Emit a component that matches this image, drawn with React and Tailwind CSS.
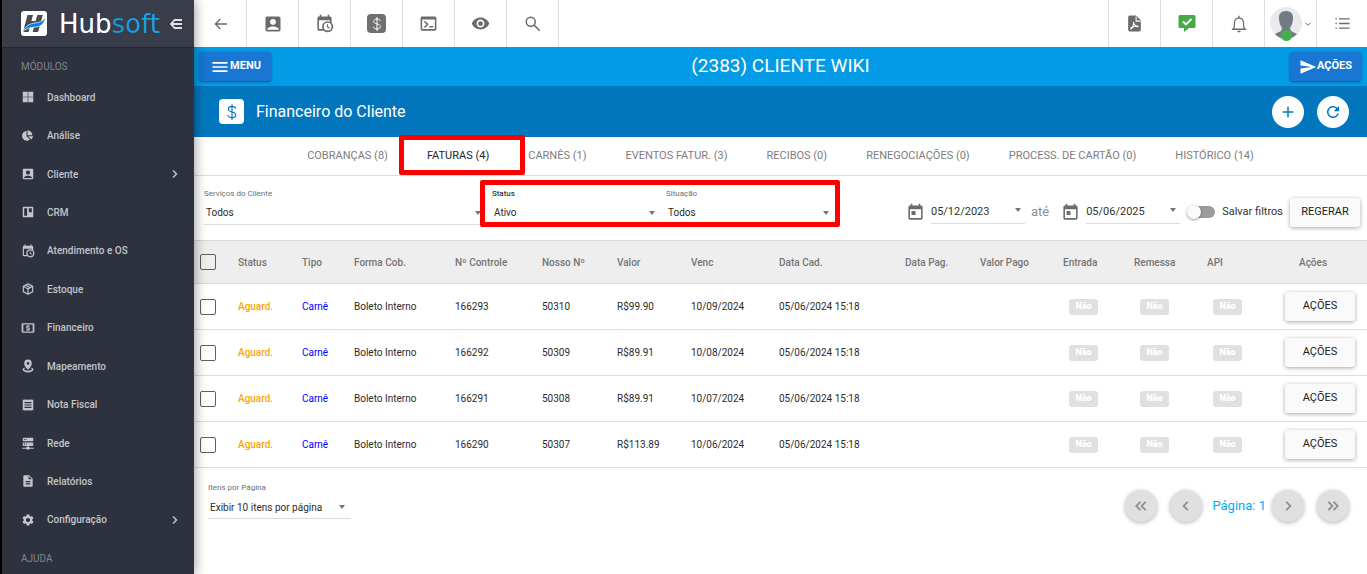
import * as React from "react";
import {
  MdAccountBox,
  MdAdd,
  MdDescription,
  MdMenu,
  MdReceipt,
  MdRefresh,
  MdSend,
  MdSettings,
  MdToday,
  MdVisibility,
} from "react-icons/md";
import { FaChartPie } from "react-icons/fa";

const ICONS = {
  windows: "M3 3h8.5v8.5H3zM12.5 3H21v8.5h-8.5zM3 12.5h8.5V21H3zM12.5 12.5H21V21h-8.5z",
  board:
    "M4 3h16a1 1 0 0 1 1 1v16a1 1 0 0 1-1 1H4a1 1 0 0 1-1-1V4a1 1 0 0 1 1-1M5.5 5.5v13h5v-13zM13.5 5.5v7h5v-7z",
  calendarClock:
    "M15 13h1.5v2.82l2.44 1.41-.75 1.3L15 16.69V13M19 8H5v11h4.67A7 7 0 0 1 9 16a7 7 0 0 1 7-7c1.07 0 2.09.24 3 .67V8M5 21a2 2 0 0 1-2-2V5c0-1.11.89-2 2-2h1V1h2v2h8V1h2v2h1a2 2 0 0 1 2 2v6.1A7 7 0 0 1 16 23a6.97 6.97 0 0 1-4.9-2H5m11-9.85a4.85 4.85 0 1 0 0 9.7 4.85 4.85 0 0 0 0-9.7z",
  box: "M21 16.5c0 .38-.21.71-.53.88l-7.9 4.44c-.16.12-.36.18-.57.18s-.41-.06-.57-.18l-7.9-4.44A1 1 0 0 1 3 16.5v-9c0-.38.21-.71.53-.88l7.9-4.44c.16-.12.36-.18.57-.18s.41.06.57.18l7.9 4.44c.32.17.53.5.53.88v9M12 4.15l-1.89 1.07L16 8.61l1.96-1.11L12 4.15M6.04 7.5 12 10.85l1.96-1.1-5.88-3.4L6.04 7.5M5 15.91l6 3.38v-6.71L5 9.21v6.7m14 0v-6.7l-6 3.37v6.71l6-3.38z",
  cash: "M3 4h18a2 2 0 0 1 2 2v12a2 2 0 0 1-2 2H3a2 2 0 0 1-2-2V6a2 2 0 0 1 2-2M4 6v12h16V6zM11 17v-1H9v-2h4v-1h-3a1 1 0 0 1-1-1V9a1 1 0 0 1 1-1h1V7h2v1h2v2h-4v1h3a1 1 0 0 1 1 1v3a1 1 0 0 1-1 1h-1v1z",
  pin: "M12 1a6.5 6.5 0 0 1 6.5 6.5C18.5 12.3 12 18.5 12 18.5S5.5 12.3 5.5 7.5A6.5 6.5 0 0 1 12 1M12 5.2a2.3 2.3 0 1 0 0 4.6 2.3 2.3 0 0 0 0-4.6M5.5 14.5l1.3 1.6c-1 .5-1.6 1-1.6 1.6 0 1.3 3 2.5 6.8 2.5s6.8-1.2 6.8-2.5c0-.6-.6-1.1-1.6-1.6l1.3-1.6c1.8 1 2.7 2.2 2.7 3.5 0 3-4 5-9.2 5s-9.2-2-9.2-5c0-1.3.9-2.5 2.7-3.5z",
  server:
    "M13 19h1a1 1 0 0 1 1 1h7v2h-7a1 1 0 0 1-1 1h-4a1 1 0 0 1-1-1H2v-2h7a1 1 0 0 1 1-1h1v-2H4a1 1 0 0 1-1-1v-4a1 1 0 0 1 1-1h16a1 1 0 0 1 1 1v4a1 1 0 0 1-1 1h-7v2M4 3h16a1 1 0 0 1 1 1v4a1 1 0 0 1-1 1H4a1 1 0 0 1-1-1V4a1 1 0 0 1 1-1m5 4h1V5H9v2m0 8h1v-2H9v2M5 5v2h2V5H5m0 8v2h2v-2H5z",
  console:
    "M20 19V7H4v12h16m0-16a2 2 0 0 1 2 2v14a2 2 0 0 1-2 2H4a2 2 0 0 1-2-2V5c0-1.11.9-2 2-2h16m-7 14v-2h5v2h-5m-3.42-4L5.57 9H8.4l3.3 3.3c.39.39.39 1.03 0 1.42L8.42 17H5.59l3.99-4z",
};

const Icon = ({ name, className }) => (
  <svg viewBox="0 0 24 24" fill="currentColor" fillRule="evenodd" className={className} aria-hidden="true">
    <path d={ICONS[name]} />
  </svg>
);

const Line = ({ d, className, width = 2 }) => (
  <svg
    viewBox="0 0 24 24"
    fill="none"
    stroke="currentColor"
    strokeWidth={width}
    className={className}
    aria-hidden="true"
  >
    <path d={d} />
  </svg>
);

const MENU = [
  { label: "Dashboard", icon: <Icon name="windows" className="size-3.5" /> },
  { label: "Análise", icon: <FaChartPie className="ml-px size-[11px]" /> },
  { label: "Cliente", icon: <MdAccountBox className="size-3.5" />, open: true },
  { label: "CRM", icon: <Icon name="board" className="size-3.5" /> },
  { label: "Atendimento e OS", icon: <Icon name="calendarClock" className="size-3.5" /> },
  { label: "Estoque", icon: <Icon name="box" className="size-3.5" /> },
  { label: "Financeiro", icon: <Icon name="cash" className="size-3.5" /> },
  { label: "Mapeamento", icon: <Icon name="pin" className="size-3.5" /> },
  { label: "Nota Fiscal", icon: <MdReceipt className="size-3.5" /> },
  { label: "Rede", icon: <Icon name="server" className="size-3.5" /> },
  { label: "Relatórios", icon: <MdDescription className="size-3.5" /> },
  { label: "Configuração", icon: <MdSettings className="size-3.5" />, open: true },
];

const TABS = [
  "COBRANÇAS (8)",
  "FATURAS (4)",
  "CARNÊS (1)",
  "EVENTOS FATUR. (3)",
  "RECIBOS (0)",
  "RENEGOCIAÇÕES (0)",
  "PROCESS. DE CARTÃO (0)",
  "HISTÓRICO (14)",
];

const COLUMNS = [
  { label: "Status", width: "w-[64px]" },
  { label: "Tipo", width: "w-[52px]" },
  { label: "Forma Cob.", width: "w-[101px]" },
  { label: "Nº Controle", width: "w-[87px]" },
  { label: "Nosso Nº", width: "w-[75px]" },
  { label: "Valor", width: "w-[74px]" },
  { label: "Venc", width: "w-[88px]" },
  { label: "Data Cad.", width: "w-[126px]" },
  { label: "Data Pag.", width: "w-[75px]" },
  { label: "Valor Pago", width: "w-[83px]" },
  { label: "Entrada", width: "w-[71px]" },
  { label: "Remessa", width: "w-[73px]" },
  { label: "API", width: "w-[78px]" },
];

const INVOICES = [
  { control: "166293", number: "50310", value: "R$99.90", due: "10/09/2024" },
  { control: "166292", number: "50309", value: "R$89.91", due: "10/08/2024" },
  { control: "166291", number: "50308", value: "R$89.91", due: "10/07/2024" },
  { control: "166290", number: "50307", value: "R$113.89", due: "10/06/2024" },
];

const Dollar = ({ className }) => (
  <Line
    className={className}
    width={1.5}
    d="M17 7.5C16.5 5.6 14.7 4.5 12 4.5S7.2 5.9 7.2 8c0 2.4 2 3.2 4.8 3.9s5 1.6 5 4c0 2.2-2 3.6-5 3.6s-5-1.3-5.4-3.5M12 1.5v21"
  />
);

const Sidebar = () => (
  <aside className="relative z-20 w-[194px] shrink-0 border-l-2 border-black bg-[#2d323e] text-[#c3c5c9] shadow-[0_0_12px_rgba(0,0,0,0.45)]">
    <div className="flex h-12 items-center border-b border-[#22262f] bg-[#383d49] pl-[19px]">
      <svg viewBox="0 0 26 25" className="h-[25px] w-[26px]" aria-hidden="true">
        <rect width="26" height="25" rx="3" fill="#fff" />
        <path d="M6.500 4h5.500l-1.600 6h4.200l1.700-6h5.500l-4.700 17h-5.500l1.700-6H9.200l-1.700 6H2z" fill="#4a4a4c" />
        <path d="M1.800 20.500C5 14 10 12.500 14 12s7.500-1.500 10.500-5.500c-1 6-4.500 9-9.500 9.500-5 .5-9 1-13.200 4.500z" fill="#087bf5" stroke="#fff" strokeWidth=".7" />
      </svg>
      <span className="ml-3 bg-gradient-to-r from-[#1b7fd0] to-[#17a9e6] bg-clip-text font-['DejaVu_Sans'] text-[26px] leading-none text-transparent">
        <span className="text-white">Hub</span>soft
      </span>
      <button type="button" aria-label="Recolher menu" className="ml-2.5 text-[#dfe0e3]">
        <svg viewBox="0 0 12 10" className="h-2.5 w-3" fill="none" stroke="currentColor" strokeWidth="1.800">
          <path d="M4 1h8M1 5h11M4 9h8M4.500 1.200 1 5l3.500 3.800" />
        </svg>
      </button>
    </div>
    <h2 className="flex h-[30px] items-end pl-[19px] text-[10px] text-[#81858d]">
      <span className="pb-1">MÓDULOS</span>
    </h2>
    <ul className="flex h-[461px] flex-col">
      {MENU.map((item) => (
        <li key={item.label} className="flex flex-1">
          <button
            type="button"
            className="flex w-full items-center pl-[19px] pr-[13px] text-[10px] font-medium"
          >
            <span className="w-[26px]">{item.icon}</span>
            {item.label}
            {item.open && <Line d="M8 5l7 7-7 7" width={3} className="ml-auto size-3" />}
          </button>
        </li>
      ))}
    </ul>
    <h2 className="pl-[19px] pt-3 text-[10px] text-[#81858d]">AJUDA</h2>
  </aside>
);

const ToolButton = ({ label, side = "border-r", children }) => (
  <button
    type="button"
    aria-label={label}
    className={`flex h-full w-[52px] items-center justify-center border-[#dedede] ${side}`}
  >
    {children}
  </button>
);

const Toolbar = () => (
  <header className="flex h-[47px] bg-white pl-px text-[#6b6b6b]">
    <ToolButton label="Voltar">
      <Line d="M21 12H4M11 4.500L3.500 12l7.500 7.500" className="size-4" />
    </ToolButton>
    <ToolButton label="Clientes">
      <MdAccountBox className="size-5" />
    </ToolButton>
    <ToolButton label="Agenda">
      <Icon name="calendarClock" className="size-[19px]" />
    </ToolButton>
    <ToolButton label="Financeiro">
      <span className="flex size-[19px] items-center justify-center rounded bg-[#6f6f6f] text-white">
        <Dollar className="size-4" />
      </span>
    </ToolButton>
    <ToolButton label="Console">
      <Icon name="console" className="size-[19px]" />
    </ToolButton>
    <ToolButton label="Visualizar">
      <MdVisibility className="size-[19px]" />
    </ToolButton>
    <ToolButton label="Buscar">
      <Line d="M15 9a6 6 0 1 1-12 0a6 6 0 0 1 12 0M13.500 13.500L21 21" className="size-[18px]" />
    </ToolButton>

    <div className="-mr-px ml-auto flex">
      <ToolButton label="PDF" side="border-l">
        <svg viewBox="0 0 24 24" className="size-[19px]" aria-hidden="true">
          <path d="M6 2h8l6 6v12a2 2 0 0 1-2 2H6a2 2 0 0 1-2-2V4a2 2 0 0 1 2-2z" fill="currentColor" />
          <path d="M14 3v6h5.500" fill="none" stroke="#fff" strokeWidth="1.300" />
          <path d="M10.500 10c1 3.500 3 6 6.500 6.500M10.800 10c.2 4-1.500 7.500-4 9.500M7 18c2.500-2.200 6-3 10-2.500" fill="none" stroke="#fff" strokeWidth="1.400" />
        </svg>
      </ToolButton>
      <ToolButton label="Mensagens" side="border-l">
        <svg viewBox="0 0 18 17" className="h-[17px] w-[18px]" aria-hidden="true">
          <path d="M2 0h14a1.500 1.500 0 0 1 1.500 1.500v10A1.500 1.500 0 0 1 16 13h-5l-5 4v-4H2A1.500 1.500 0 0 1 .5 11.500v-10A1.500 1.500 0 0 1 2 0z" fill="#43ab47" />
          <path d="M5 6.500l3 3 5.500-5.500" fill="none" stroke="#fff" strokeWidth="1.800" />
        </svg>
      </ToolButton>
      <ToolButton label="Notificações" side="border-l">
        <Line
          width={1.7}
          className="size-[18px]"
          d="M2.500 19h19M4.500 18.500c1.300-1.500 1.500-3.500 1.500-8.500a6 6 0 0 1 12 0c0 5 .2 7 1.500 8.500M10 22h4M12 1v3"
        />
      </ToolButton>
      <ToolButton label="Usuário" side="border-l">
        <svg viewBox="0 0 32 34" className="h-[34px] w-8" aria-hidden="true">
          <circle cx="16" cy="16" r="16" fill="#e9eaee" />
          <path d="M16 4c5 0 7.500 3 7 8-.3 4-1.500 7-3 9l1 3 6 3c-3 3.500-7 5-11 5s-8-1.500-11-5l6-3 1-3c-1.500-2-2.700-5-3-9-.5-5 2-8 7-8z" fill="#727a84" />
          <circle cx="16.500" cy="28.500" r="5.500" fill="#41b34a" />
          <path d="M13 28.500l2.500 2.500 5-5" fill="none" stroke="#6d8a70" strokeWidth="1" />
        </svg>
        <Line d="M4 8l8 8 8-8" width={3} className="ml-0.5 size-2" />
      </ToolButton>
      <ToolButton label="Lista" side="border-l">
        <Line d="M7 5.500h15M7 12h15M7 18.500h15M2 5.500h2M2 12h2M2 18.500h2" className="size-[17px]" />
      </ToolButton>
    </div>
  </header>
);

const Highlight = ({ className }) => (
  <span
    aria-hidden="true"
    className={`pointer-events-none absolute rounded-xs border-5 border-[#fe0000] ${className}`}
  />
);

const Caret = ({ className }) => (
  <span
    aria-hidden="true"
    className={`pointer-events-none absolute border-x-3 border-t-4 border-x-transparent border-t-[#757575] ${className}`}
  />
);

const SelectField = ({ id, label, value, className, active, caret = "right-px" }) => (
  <div className={className}>
    <label htmlFor={id} className={`block text-[8px] leading-3 ${active ? "text-black" : "text-[#6d6d6d]"}`}>
      {label}
    </label>
    <div className="relative mt-0.5 border-b border-[#dcdcdc]">
      <select
        id={id}
        className="block h-[22px] w-full appearance-none bg-transparent pl-0.5 text-[10px] text-[#2b2b2b] outline-none"
      >
        <option>{value}</option>
      </select>
      <Caret className={`top-[9px] ${caret}`} />
    </div>
  </div>
);

const DateField = ({ label, value }) => (
  <div className="flex items-center">
    <MdToday className="size-[19px] text-[#6b6b6b]" />
    <div className="relative ml-1.5 border-b border-[#dcdcdc]">
      <input
        type="text"
        aria-label={label}
        defaultValue={value}
        className="block h-[22px] w-[94px] bg-transparent text-[11px] text-[#333] outline-none"
      />
      <Caret className="right-1 top-[7px]" />
    </div>
  </div>
);

const RaisedButton = ({ children }) => (
  <button
    type="button"
    className="block h-[29px] w-[70px] rounded-[3px] bg-[#fafafa] text-[11px] text-[#212121] shadow-[0_1px_4px_rgba(0,0,0,0.35)]"
  >
    {children}
  </button>
);

const Filters = () => (
  <section className="flex h-16 items-center pr-[7px]">
    <div className="flex flex-1 gap-2.5 pb-1 pl-2.5">
      <SelectField id="service" label="Serviços do Cliente" value="Todos" className="flex-1" />
      <div className="relative flex gap-2.5">
        <SelectField id="status" label="Status" value="Ativo" className="w-[164px]" active />
        <SelectField id="situation" label="Situação" value="Todos" className="w-[164px]" />
        <Highlight className="-bottom-0.5 -left-3 -right-2.5 -top-2" />
      </div>
    </div>
    <div className="ml-[76px] flex items-center pt-2">
      <DateField label="Data inicial" value="05/12/2023" />
      <span className="ml-1.5 mr-3 text-[13px] text-[#8e8e8e]">até</span>
      <DateField label="Data final" value="05/06/2025" />
      <label className="mx-[7px] flex items-center gap-[7px] text-[11px] text-[#333]">
        <input type="checkbox" role="switch" className="peer sr-only" />
        <span className="flex h-3.5 w-7 items-center">
          <span className="z-10 size-3.5 rounded-full bg-[#fafafa] shadow-[0_1px_3px_rgba(0,0,0,0.4)]" />
          <span className="-ml-2 h-3 w-[22px] rounded-full bg-[#9b9b9b]" />
        </span>
        Salvar filtros
      </label>
      <RaisedButton>REGERAR</RaisedButton>
    </div>
  </section>
);

const CheckBox = ({ label }) => (
  <input
    type="checkbox"
    aria-label={label}
    className="ml-1.5 block size-4 appearance-none rounded-xs border border-[#5f5f5f] checked:bg-[#0277bd]"
  />
);

const NoBadge = () => (
  <span className="ml-1.5 flex h-4 w-[29px] items-center justify-center rounded-[3px] bg-[#e0e0e0] text-[9px] font-black text-white">
    Não
  </span>
);

const InvoiceTable = () => (
  <table className="w-full table-fixed border-collapse text-left text-[10px] text-[#2b2b2b]">
    <thead>
      <tr className="h-[43px] border-y border-[#d8d8d8] bg-[#eee] text-[#757575]">
        <th className="w-[44px]">
          <CheckBox label="Selecionar todas" />
        </th>
        {COLUMNS.map((column) => (
          <th key={column.label} className={`${column.width} font-medium`}>
            {column.label}
          </th>
        ))}
        <th className="w-[82px] pl-3.5 font-medium">Ações</th>
      </tr>
    </thead>
    <tbody>
      {INVOICES.map((invoice) => (
        <tr key={invoice.control} className="h-[46px] border-b border-[#dedede]">
          <td>
            <CheckBox label={`Selecionar fatura ${invoice.number}`} />
          </td>
          <td className="font-medium text-[#ffa500]">Aguard.</td>
          <td className="text-[#0000ff]">Carnê</td>
          <td>Boleto Interno</td>
          <td>{invoice.control}</td>
          <td>{invoice.number}</td>
          <td>{invoice.value}</td>
          <td>{invoice.due}</td>
          <td>05/06/2024 15:18</td>
          <td />
          <td />
          <td>
            <NoBadge />
          </td>
          <td>
            <NoBadge />
          </td>
          <td>
            <NoBadge />
          </td>
          <td>
            <RaisedButton>AÇÕES</RaisedButton>
          </td>
        </tr>
      ))}
    </tbody>
  </table>
);

const PageButton = ({ label, d }) => (
  <button
    type="button"
    aria-label={label}
    className="flex size-8 items-center justify-center rounded-full bg-[#e0e0e0] text-[#8b8b8b] shadow-[0_1px_4px_rgba(0,0,0,0.3)]"
  >
    <Line d={d} width={3} className="size-3.5" />
  </button>
);

const Pagination = () => (
  <footer className="flex items-start justify-between pl-3.5 pr-[18px] pt-3.5">
    <SelectField
      id="page-size"
      label="Itens por Página"
      value="Exibir 10 itens por página"
      className="w-[143px]"
      caret="right-1.5"
    />
    <div className="mt-2 flex items-center">
      <PageButton label="Primeira página" d="M11 5l-7 7 7 7M20 5l-7 7 7 7" />
      <span className="w-[13px]" />
      <PageButton label="Página anterior" d="M15 5l-7 7 7 7" />
      <span className="ml-2.5 mr-1.5 text-[13px] text-[#03a9f4]">Página: 1</span>
      <PageButton label="Próxima página" d="M9 5l7 7-7 7" />
      <span className="w-[13px]" />
      <PageButton label="Última página" d="M4 5l7 7-7 7M13 5l7 7-7 7" />
    </div>
  </footer>
);

const App = () => {
  const [tab, setTab] = React.useState("FATURAS (4)");

  return (
    <div className="flex h-screen overflow-hidden bg-white font-[Roboto,sans-serif]">
      <Sidebar />
      <main className="min-w-0 flex-1">
        <Toolbar />

        {/* Client bar */}
        <div className="flex h-[39px] items-center justify-between bg-[#039be5] px-1.5 text-white">
          <button
            type="button"
            className="flex h-[29px] w-[71px] items-center justify-center rounded-[3px] bg-[#1976d2] text-[11px] font-bold shadow-[0_1px_3px_rgba(0,0,0,0.4)]"
          >
            <MdMenu className="size-5" />
            MENU
          </button>
          <h1 className="text-[19px]">(2383) CLIENTE WIKI</h1>
          <button
            type="button"
            className="flex h-[29px] w-[71px] items-center justify-center rounded-[3px] bg-[#1976d2] text-[11px] font-bold shadow-[0_1px_3px_rgba(0,0,0,0.4)]"
          >
            <MdSend className="size-[18px]" />
            AÇÕES
          </button>
        </div>

        {/* Section title */}
        <div className="flex h-[51px] items-center bg-[#0277bd] pl-[25px] pr-[18px] text-white">
          <span className="flex size-[25px] items-center justify-center rounded bg-white text-[#0277bd]">
            <Dollar className="size-[18px]" />
          </span>
          <h2 className="ml-3 text-base">Financeiro do Cliente</h2>
          <div className="ml-auto flex gap-[13px] text-[#0277bd]">
            <button
              type="button"
              aria-label="Adicionar"
              className="flex size-8 items-center justify-center rounded-full bg-white"
            >
              <MdAdd className="size-[18px]" />
            </button>
            <button
              type="button"
              aria-label="Atualizar"
              className="flex size-8 items-center justify-center rounded-full bg-white"
            >
              <MdRefresh className="size-[18px]" />
            </button>
          </div>
        </div>

        <nav className="flex h-[39px] justify-center gap-[39px] border-b border-[#dcdcdc] text-[11px]">
          {TABS.map((name) => (
            <button
              key={name}
              type="button"
              onClick={() => setTab(name)}
              className={`relative ${name === tab ? "text-[#22262f]" : "text-[#7d7d7d]"}`}
            >
              {name}
              {name === "FATURAS (4)" && <Highlight className="-left-7 -right-9 -top-0.5 bottom-0" />}
            </button>
          ))}
        </nav>

        <Filters />
        <InvoiceTable />
        <Pagination />
      </main>
    </div>
  );
};

export default App;
